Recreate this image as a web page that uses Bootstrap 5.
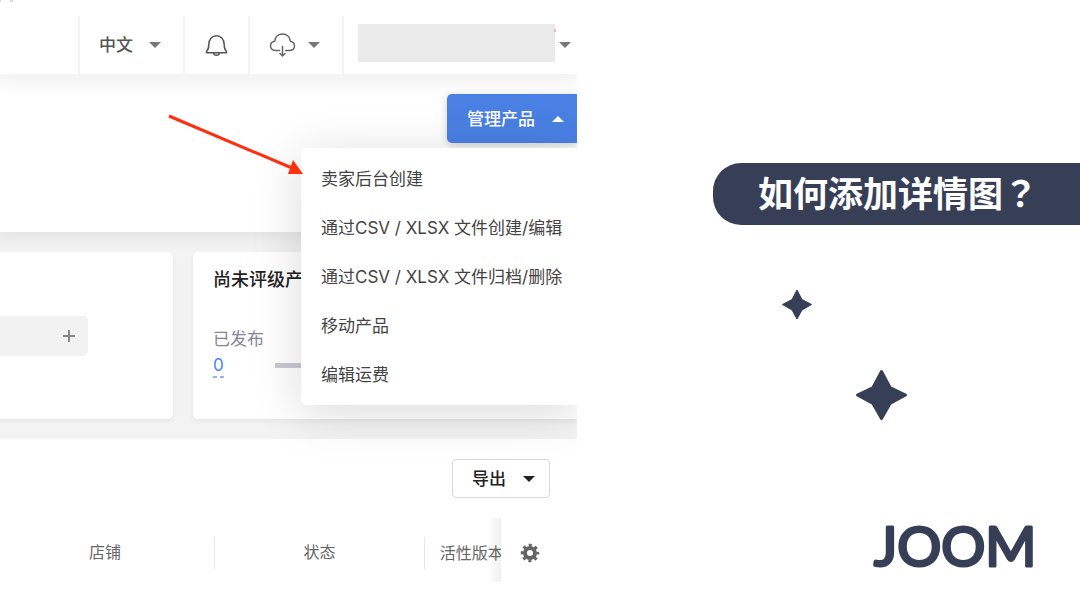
<!DOCTYPE html>
<html lang="zh-CN">
<head>
<meta charset="utf-8">
<meta name="viewport" content="width=device-width, initial-scale=1">
<title>如何添加详情图？</title>
<link href="https://cdn.jsdelivr.net/npm/bootstrap@5.3.0/dist/css/bootstrap.min.css" rel="stylesheet">
<style>
  :root { --navy: #373f57; --ink: #444; }
  body { font-family: Inter, "Noto Sans CJK SC", sans-serif; font-size: 17px; line-height: 24px; color: var(--ink); background: #fff; }
  button { font: inherit; color: inherit; }
  .shot { flex: 0 0 53.43%; }
  .tri { width: 0; height: 0; border: 6px solid transparent; border-bottom-width: 0; border-top-color: #777; }
  .tri-up { border-top-width: 0; border-bottom: 6px solid #fff; }
  .tri-dark { border-top-color: #222; }
  .crumb { left: 0; top: 0; }
  .topbar { z-index: 3; margin-top: 16px; height: 58px; box-shadow: 0 4px 16px 6px rgba(0,0,0,.05); clip-path: inset(0 0 -28px 0); }
  .cell { border: 0; border-left: 2px solid #f3f3f3; background: #fff; padding: 0 19px; }
  .cell-menu { padding-right: 22px; gap: 12px; color: #555; font-weight: 500; }
  .account { flex: 0 0 235px; padding: 0 6px 0 14px; }
  .masked { height: 38px; margin-bottom: 5px; background: #eaeaea; }
  .alert-dot { width: 2px; height: 3px; right: -1px; top: 5px; background: #ffb3b9; }
  .hero { z-index: 2; height: 158px; padding-top: 20px; box-shadow: 0 3px 14px 4px rgba(0,0,0,.06); }
  .manage { width: 130px; height: 49px; padding: 0 13px 0 20px; border: 0; border-radius: 5px 0 0 5px; background: #4a7fe3; color: #fff; font-weight: 500; box-shadow: 0 2px 8px rgba(0,0,0,.2); }
  .actions { width: 276px; top: 54px; right: 0; padding: 6px 0; background: #fff; border-radius: 5px 0 0 5px; box-shadow: 0 8px 50px rgba(0,0,0,.15); }
  .actions a { height: 49px; padding-left: 20px; color: var(--ink); white-space: nowrap; }
  .pointer { right: 273px; top: -36px; }
  .tiles { background: #f3f3f3; padding: 20px 0; gap: 20px; }
  .tile { height: 167px; background: #fff; box-shadow: 0 2px 5px rgba(0,0,0,.06); }
  .tile-a { flex: 0 0 30%; border-radius: 0 5px 5px 0; padding-top: 64px; }
  .tile-b { border-radius: 5px 0 0 5px; padding: 16px 0 0 20px; }
  .tile-b h2 { font-size: 18px; line-height: 24px; font-weight: 500; color: #222; margin: 0 0 35px; }
  .adder { width: 88px; height: 40px; padding-right: 12px; border: 0; background: #f2f2f2; border-radius: 0 5px 5px 0; }
  .muted { color: #84849a; }
  .count { color: #4a84f5; text-decoration: none; line-height: 20px; padding-bottom: 3px; background: repeating-linear-gradient(90deg, #8fb3f9 0 4px, transparent 4px 7px) bottom / 100% 2px no-repeat; }
  .meter { width: 60px; height: 5px; background: #c9c9d3; margin: 0 0 3px 51px; }
  .export { width: 98px; height: 39px; margin: 20px 27px 20px 0; border: 1px solid #d8d8d8; border-radius: 4px; background: #fff; color: #222; font-weight: 500; padding: 0 14px 0 19px; }
  .grid-head { table-layout: fixed; font-size: 16px; color: #666; }
  .grid-head th { font-weight: 400; padding: 5px 0 0; height: 64px; text-align: center; white-space: nowrap; overflow: hidden; }
  .col-shop { width: 37.3%; }
  .col-state { width: 36.3%; }
  .col-version { width: 13.2%; }
  .split { border-right: 1px solid #e6e6e6; height: 32px; line-height: 30px; }
  .fade-edge { background: linear-gradient(to left, #f0f0f0, transparent 14px); }
  .fade-edge div { padding-left: 15px; text-align: left; line-height: 30px; }
  .gear { display: block; width: 100%; border: 0; background: none; padding: 0 17px 0 0; line-height: 20px; }
  .title-pill { margin: 163px 0 0 136px; height: 62px; padding: 0 0 0 45px; border-radius: 28px 0 0 28px; background: var(--navy); color: #fff; }
  .title-pill h1 { font: 700 35px/58px "Noto Sans CJK SC", sans-serif; margin: 0; white-space: nowrap; }
  .title-pill span { font-family: "Noto Sans CJK TC", sans-serif; }
  .stars { margin: 63px 0 0 204px; }
  .logo { margin: 87px 0 0 292px; }
</style>
</head>
<body>
<div class="d-flex min-vh-100 overflow-hidden">
  <main class="shot position-relative overflow-hidden">
    <svg class="crumb position-absolute" width="16" height="2" viewBox="0 0 16 2" fill="#ddd"><path d="M0 0h1v2H0zM10 0h3v2h-3z"/></svg>
    <header class="topbar d-flex justify-content-end bg-white position-relative">
      <button class="cell cell-menu d-flex align-items-center" type="button">中文<span class="tri ms-1"></span></button>
      <button class="cell" type="button" aria-label="通知">
        <svg width="25" height="25" viewBox="0 0 25 25" fill="none" stroke="#555" stroke-width="1.5" stroke-linejoin="round"><path d="M2.500 18.700c1.800-1.800 2.300-4 2.300-7.200 0-5 3.200-8.700 7.700-8.700s7.700 3.700 7.700 8.700c0 3.200.5 5.400 2.300 7.200v1.100h-20zM9.500 20c.3 3 5.700 3 6 0"/></svg>
      </button>
      <button class="cell cell-menu d-flex align-items-center" type="button" aria-label="下载">
        <svg width="27" height="27" viewBox="0 0 27 27" fill="none" stroke="#666" stroke-width="1.500" stroke-linecap="round" stroke-linejoin="round"><path d="M10.500 18.500H7c-3.300 0-5.500-1.700-5.500-4.500 0-2.500 1.700-4.300 4.200-4.700C6 5 9 2 13.500 2S21 5 21.300 9.300c2.500.4 4.200 2.200 4.200 4.700 0 2.800-2.200 4.500-5.500 4.500h-3.500M13.500 14.500v9.500M11 21.500l2.500 2.500 2.500-2.500"/></svg>
        <span class="tri"></span>
      </button>
      <button class="cell account d-flex align-items-center" type="button" aria-label="账户">
        <span class="masked flex-grow-1 position-relative"><span class="alert-dot position-absolute"></span></span><span class="tri ms-1"></span>
      </button>
    </header>

    <section class="hero bg-white position-relative">
      <div class="position-relative d-flex justify-content-end">
        <button class="manage d-flex align-items-center justify-content-between" type="button" aria-expanded="true">管理产品<span class="tri tri-up"></span></button>
        <nav class="actions position-absolute">
          <a class="d-flex align-items-center text-decoration-none" href="#">卖家后台创建</a>
          <a class="d-flex align-items-center text-decoration-none" href="#">通过CSV / XLSX 文件创建/编辑</a>
          <a class="d-flex align-items-center text-decoration-none" href="#">通过CSV / XLSX 文件归档/删除</a>
          <a class="d-flex align-items-center text-decoration-none" href="#">移动产品</a>
          <a class="d-flex align-items-center text-decoration-none" href="#">编辑运费</a>
          <svg class="pointer position-absolute" width="140" height="70" viewBox="0 0 140 70"><path d="M5 4 128 56" stroke="#fb3010" stroke-width="3"/><path d="M139 62 124 62 129 48z" fill="#fb3010"/></svg>
        </nav>
      </div>
    </section>

    <section class="tiles d-flex">
      <div class="tile tile-a">
        <button class="adder d-flex align-items-center justify-content-end" type="button" aria-label="添加"><svg width="14" height="14" viewBox="0 0 14 14" stroke="#888" stroke-width="2"><path d="M7 1v12M1 7h12"/></svg></button>
      </div>
      <div class="tile tile-b flex-grow-1">
        <h2>尚未评级产品</h2>
        <div class="muted">已发布</div>
        <div class="d-flex align-items-center mt-1"><a class="count" href="#">0</a><div class="meter"></div></div>
      </div>
    </section>

    <section>
      <div class="d-flex justify-content-end"><button class="export d-flex align-items-center justify-content-between" type="button">导出<span class="tri tri-dark"></span></button></div>
      <table class="grid-head w-100">
        <colgroup><col class="col-shop"><col class="col-state"><col class="col-version"><col></colgroup>
        <thead><tr>
          <th scope="col"><div class="split pe-1">店铺</div></th>
          <th scope="col"><div class="split">状态</div></th>
          <th scope="col" class="fade-edge"><div>活性版本</div></th>
          <th scope="col"><button class="gear" type="button" aria-label="设置"><svg width="20" height="20" viewBox="-10 -10 20 20" fill="none" stroke="#666"><circle r="5" stroke-width="4"/><circle r="7.500" stroke-width="3.500" stroke-dasharray="2.890 3" stroke-dashoffset="1.445"/></svg></button></th>
        </tr></thead>
      </table>
    </section>
  </main>

  <aside class="flex-grow-1">
    <div class="title-pill"><h1>如何添加详情图<span lang="zh-TW">？</span></h1></div>
    <svg class="stars d-block" width="128" height="134" viewBox="0 0 128 134" fill="#373f57" stroke="#373f57" stroke-linejoin="round"><path stroke-width="1" d="M16 2 21 11.500 30.500 16.500 21 22 16 31 11 22 1.500 16.500 11 11.500z"/><path stroke-width="3" d="M100.500 83.500 109 99.500 124.500 107 109 115.500 100.500 130.500 92 115.500 76.500 107 92 99.500z"/></svg>
    <svg class="logo d-block" width="176" height="84" viewBox="0 0 176 84" role="img" aria-label="JOOM"><text x="5" y="57" font-family="Lato, sans-serif" font-weight="400" font-size="55" fill="#373f57" stroke="#373f57" stroke-width="3" stroke-linejoin="round">JOOM</text></svg>
  </aside>
</div>
<script src="https://cdn.jsdelivr.net/npm/bootstrap@5.3.0/dist/js/bootstrap.bundle.min.js"></script>
</body>
</html>
